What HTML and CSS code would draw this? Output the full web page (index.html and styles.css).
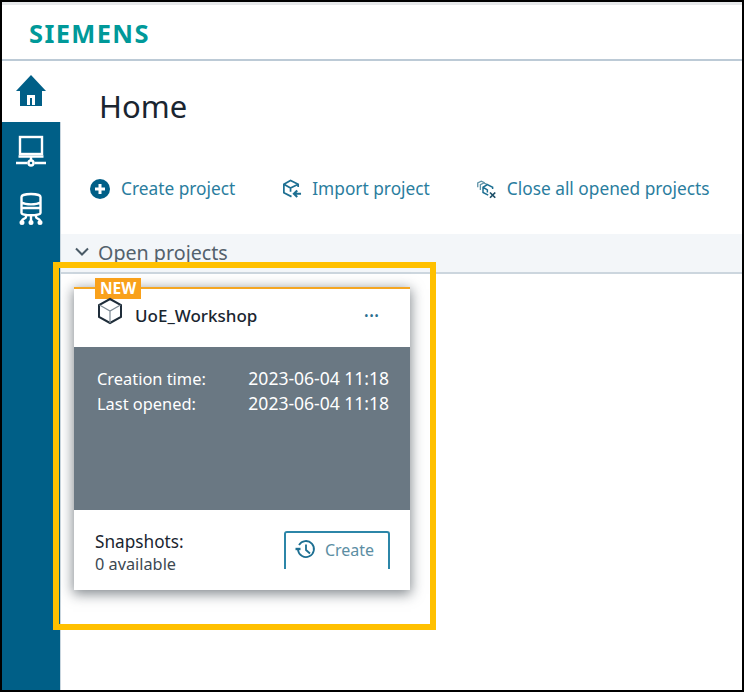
FILE: index.html
```html
<!DOCTYPE html>
<html lang="en">
<head>
    <meta charset="UTF-8">
    <meta name="viewport" content="width=device-width, initial-scale=1.0">
    <title>Home</title>
    <link rel="stylesheet" href="styles.css">
</head>
<body>
    <div class="frame">
        <header class="topbar">
            <span class="logo">SIEMENS</span>
        </header>
        <div class="main">
            <nav class="sidebar">
                <a class="nav-item active">
                    <svg width="32" height="32" viewBox="0 0 32 32"><path d="M16 1 L31 17 H27 V32 H5 V17 H1 Z" fill="#005f87"/><path d="M12 31 V21 H20 V31 H17 V24 H15 V31 Z" fill="#fff"/></svg>
                </a>
                <a class="nav-item">
                    <svg width="32" height="32" viewBox="0 0 32 32" fill="none" stroke="#fff" stroke-width="2.4"><rect x="5" y="2" width="22" height="17"/><path d="M3.500 21.500 H28.500 M16 21 V26 M1 28 H12.500 M19.500 28 H31"/><circle cx="16" cy="28" r="2.500"/></svg>
                </a>
                <a class="nav-item">
                    <svg width="26" height="34" viewBox="0 0 26 34" fill="none" stroke="#fff" stroke-width="2.400"><path d="M3.500 5 C3.500 1 22.500 1 22.500 5 V21 C22.500 24 3.500 24 3.500 21 Z M3.500 10.500 C8 13 18 13 22.500 10.500 M3.500 16 H22.500"/><path d="M13 23 V29 M8 23 V25 C8 27 4 26 4 29 M18 23 V25 C18 27 22 26 22 29"/><circle cx="4" cy="30.500" r="1.300"/><circle cx="13" cy="30.500" r="1.300"/><circle cx="22" cy="30.500" r="1.300"/></svg>
                </a>
            </nav>
            <main class="content">
                <h1 class="page-title">Home</h1>
                <div class="toolbar">
                    <a class="tool">
                        <svg width="22" height="22" viewBox="0 0 22 22"><circle cx="11" cy="11" r="10" fill="#005f87"/><path d="M11 6 V16 M6 11 H16" stroke="#fff" stroke-width="3"/></svg>
                        Create project
                    </a>
                    <a class="tool">
                        <svg width="21" height="22" viewBox="0 0 22 22" fill="none" stroke="#1d6f92" stroke-width="1.800"><path d="M11 19 L3 15 V6 L10 2 L18 6 V9 M3 6 L10 10 V14 M10 10 L18 6"/><path d="M21 16 H14 M17 12.500 L13.500 16 L17 19.500" stroke-width="2.200"/></svg>
                        Import project
                    </a>
                    <a class="tool">
                        <svg width="21" height="20" viewBox="0 0 24 22" fill="none" stroke="#5f93a8" stroke-width="1.500"><path d="M2 9 V4 L6 2 L10 4 M5 12 V6 L9 4 L13 6"/><path d="M14 18 L8 15 V9 L13 6 L19 9 V11 M8 9 L13 12 V15" stroke="#1d6f92" stroke-width="1.700"/><path d="M16 15 L22 21 M22 15 L16 21" stroke="#1d4f68" stroke-width="2"/></svg>
                        Close all opened projects
                    </a>
                </div>
                <section class="section">
                    <div class="section-head">
                        <svg width="14" height="10" viewBox="0 0 14 10" fill="none" stroke="#4a5a66" stroke-width="2"><path d="M1 1.500 L7 7.500 L13 1.500"/></svg>
                        Open projects
                    </div>
                    <article class="card">
                        <span class="badge">NEW</span>
                        <div class="card-head">
                            <svg class="cube" width="26" height="28" viewBox="0 0 26 28" fill="none" stroke="#1f2d3a" stroke-width="2"><path d="M13 2 L24 8 V20 L13 26 L2 20 V8 Z"/><path d="M2.500 8 L13 14 L23.500 8 M13 14 V26" stroke-width="1.200" stroke="#7d8a94"/></svg>
                            <span class="card-name">UoE_Workshop</span>
                            <span class="more">&middot;&middot;&middot;</span>
                        </div>
                        <div class="card-body">
                            <div class="meta"><span>Creation time:</span><span class="meta-value">2023-06-04 11:18</span></div>
                            <div class="meta"><span>Last opened:</span><span class="meta-value">2023-06-04 11:18</span></div>
                        </div>
                        <div class="card-foot">
                            <div class="snapshots">
                                <div class="snap-title">Snapshots:</div>
                                <div>0 available</div>
                            </div>
                            <a class="create-btn">
                                <svg width="21" height="21" viewBox="0 0 21 21" fill="none" stroke="#1d6f92" stroke-width="1.800"><path d="M4 6 A8 8 0 1 1 3 11"/><path d="M0.500 10 H5.500" stroke-width="2.400"/><path d="M11 5.500 V11 L15 14.500"/></svg>
                                Create
                            </a>
                        </div>
                    </article>
                </section>
            </main>
        </div>
        <div class="highlight"></div>
    </div>
</body>
</html>
```

FILE: styles.css
```css
body {
    font-family: "Noto Sans", sans-serif;
    background-color: #fff;
    margin: 0;
    padding: 0;
}
.frame {
    position: relative;
    box-sizing: border-box;
    width: 744px;
    height: 692px;
    border: 2px solid #000;
    display: flex;
    flex-direction: column;
    overflow: hidden;
}
.topbar {
    box-sizing: border-box;
    height: 59px;
    padding: 13px 0 0 27px;
    border-top: 3px solid #e6e8ea;
    border-bottom: 2px solid #bccad6;
}
.logo {
    display: block;
    font-size: 25.500px;
    line-height: 30px;
    font-weight: 700;
    color: #009999;
    letter-spacing: 1.350px;
}
.main {
    flex: 1;
    display: flex;
    min-height: 0;
}
.sidebar {
    width: 58px;
    background-color: #005f87;
    border-right: 1px solid #c9d6df;
    flex-shrink: 0;
}
.nav-item {
    height: 58px;
    display: flex;
    justify-content: center;
    align-items: center;
}
.nav-item.active {
    box-sizing: border-box;
    height: 61px;
    background-color: #fff;
    padding: 0 2px 4px 0;
    margin-right: -1px;
}
.content {
    flex: 1;
    min-width: 0;
}
.page-title {
    margin: 0;
    padding: 25px 0 0 38px;
    font-size: 31px;
    line-height: 41px;
    font-weight: 400;
    color: #1a2530;
}
.toolbar {
    display: flex;
    margin-top: 50px;
    padding-left: 28px;
    gap: 46px;
}
.tool {
    display: flex;
    align-items: center;
    gap: 10px;
    font-size: 17.300px;
    line-height: 24px;
    color: #2a7d9e;
}
.section {
    margin-top: 33px;
}
.section-head {
    box-sizing: border-box;
    height: 40px;
    padding: 0 0 2px 14px;
    display: flex;
    align-items: center;
    gap: 9px;
    font-size: 19.700px;
    color: #54616c;
    background-color: #f3f6f9;
    border-bottom: 2px solid #ccd6de;
}
.card {
    position: relative;
    box-sizing: border-box;
    width: 336px;
    height: 303px;
    margin: 13px 0 0 13px;
    border-top: 2px solid #f5a623;
    background-color: #fff;
    box-shadow: 0 3px 12px 1px rgba(30, 40, 50, 0.55);
    display: flex;
    flex-direction: column;
}
.badge {
    position: absolute;
    left: 21px;
    top: -11px;
    background-color: #f9a11b;
    color: #fff;
    font-size: 15.500px;
    line-height: 21px;
    font-weight: 700;
    padding: 0 5px;
}
.card-head {
    position: relative;
    height: 58px;
    display: flex;
    align-items: center;
    padding: 0 31px 0 61px;
}
.cube {
    position: absolute;
    left: 23px;
    top: 8px;
}
.card-name {
    flex: 1;
    font-size: 17px;
    font-weight: 500;
    color: #1a2530;
    margin-top: -6px;
}
.more {
    font-size: 21px;
    line-height: 20px;
    font-weight: 400;
    color: #2c6f8f;
    letter-spacing: -0.500px;
    margin-top: -6px;
}
.card-body {
    box-sizing: border-box;
    height: 163px;
    padding: 19px 21px 0 23px;
    background-color: #6a7883;
    color: #fff;
    font-size: 16.400px;
}
.meta {
    display: flex;
    justify-content: space-between;
    align-items: baseline;
    line-height: 25px;
}
.meta-value {
    font-size: 17.500px;
}
.card-foot {
    flex: 1;
    display: flex;
    justify-content: space-between;
    align-items: flex-start;
    padding: 21px 20px 0 21px;
    overflow: hidden;
}
.snapshots {
    font-size: 16.300px;
    line-height: 22px;
    color: #3c4852;
}
.snap-title {
    font-size: 17.200px;
    color: #1a2530;
}
.create-btn {
    box-sizing: border-box;
    display: flex;
    align-items: center;
    justify-content: center;
    gap: 9px;
    width: 106px;
    height: 38px;
    padding: 0 5px 3px 0;
    border: 2px solid #2c86a8;
    border-bottom: none;
    border-radius: 3px 3px 0 0;
    font-size: 16px;
    color: #5c8ea3;
}
.highlight {
    position: absolute;
    left: 51px;
    top: 260px;
    width: 371px;
    height: 356px;
    border: 6px solid #ffc000;
}
```
